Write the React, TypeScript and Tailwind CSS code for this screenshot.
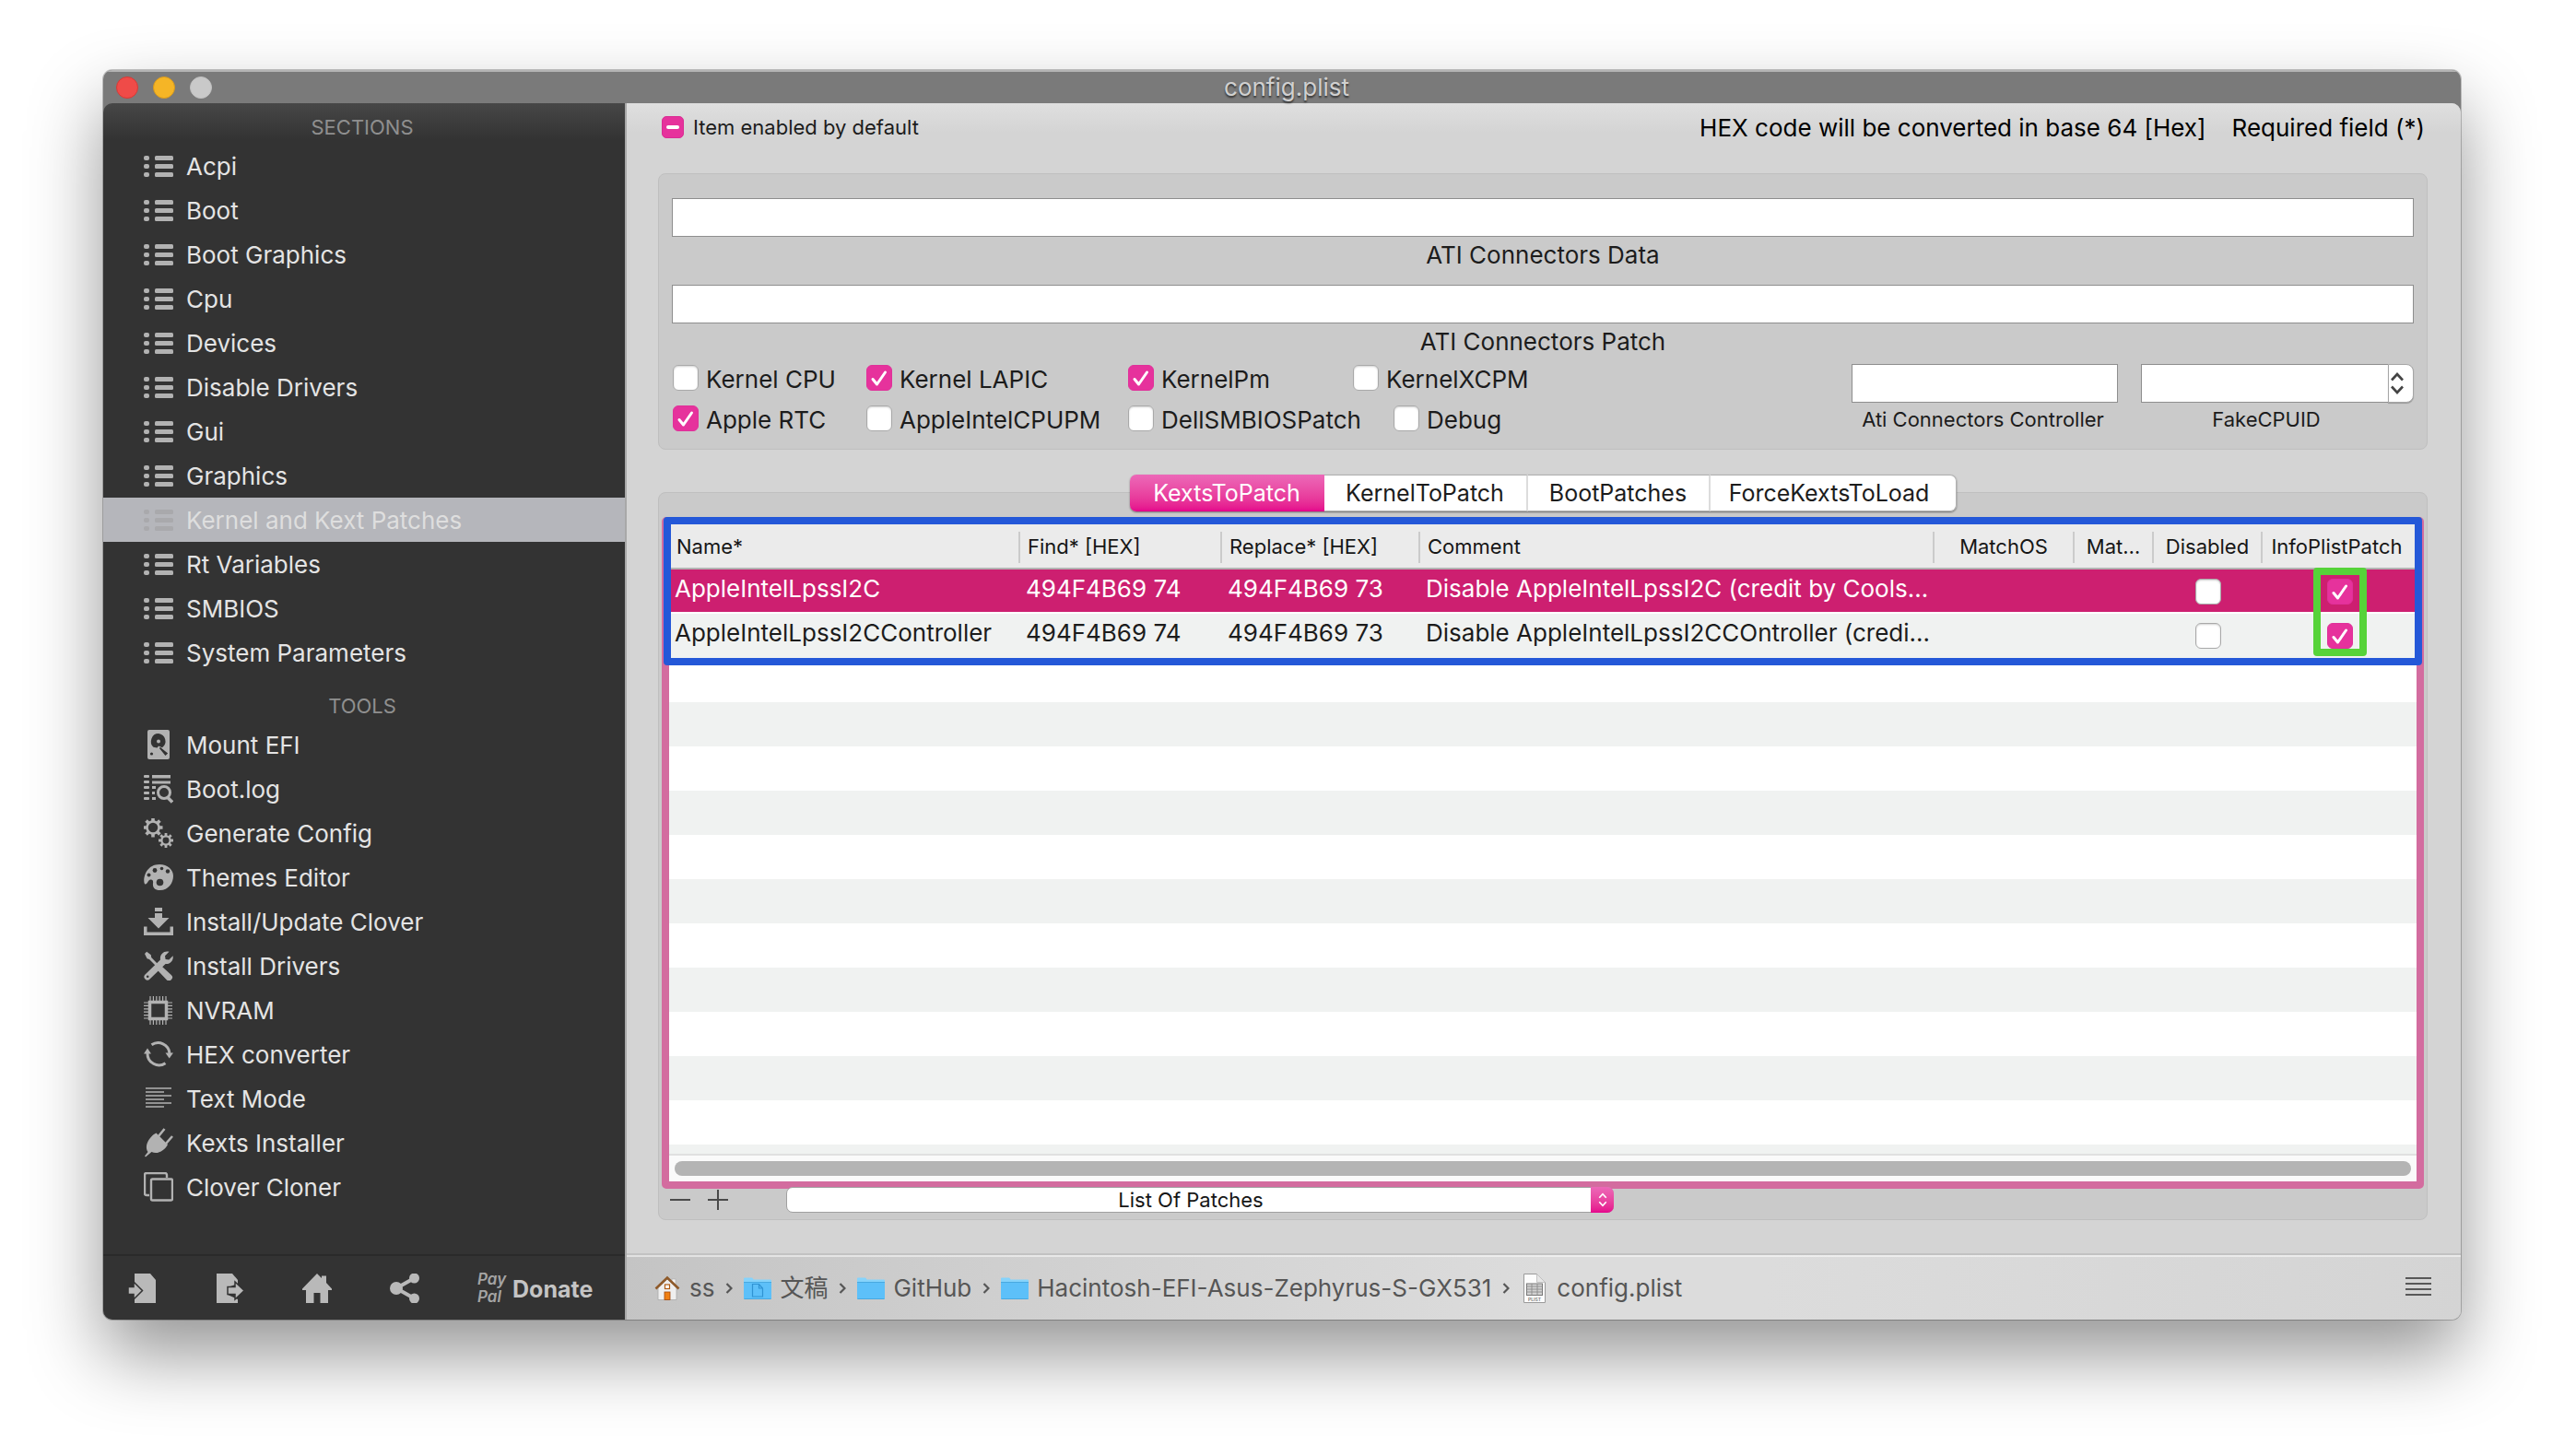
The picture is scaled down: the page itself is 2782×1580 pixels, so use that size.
import React, { useEffect, useRef } from "react";

/* ---------- sidebar icons (32 x 32 grid) ---------- */

function Svg({ children, className = "size-8" }: { children: React.ReactNode; className?: string }) {
  return (
    <svg viewBox="0 0 32 32" fill="currentColor" className={`${className} shrink-0`} aria-hidden="true">
      {children}
    </svg>
  );
}

function gearTeeth(cx: number, cy: number, from: number, to: number) {
  return Array.from({ length: 8 }, (_, i) => {
    const c = Math.cos((i * Math.PI) / 4);
    const s = Math.sin((i * Math.PI) / 4);
    return `M${(cx + from * c).toFixed(2)} ${(cy + from * s).toFixed(2)}L${(cx + to * c).toFixed(2)} ${(cy + to * s).toFixed(2)}`;
  }).join("");
}

const ListIcon = () => (
  <Svg>
    {[5, 14, 23].map((y) => (
      <g key={y}>
        <rect x="0" y={y} width="6" height="5" rx="2" />
        <rect x="12" y={y} width="20" height="5" rx="1.5" />
      </g>
    ))}
  </Svg>
);

const DiskIcon = () => (
  <Svg>
    <path d="M6 0h20a2 2 0 0 1 2 2v28a2 2 0 0 1-2 2H6a2 2 0 0 1-2-2V2a2 2 0 0 1 2-2Z" />
    <path d="M16 4a8 8.500 0 0 0-5.500 14.800l4 .7 1.500-2 4 1.800A8.500 8.500 0 0 0 16 4Z" fill="#333" />
    <path d="m17.500 19.500 7.500 6-1.500 1.500Z" fill="#333" stroke="#333" strokeWidth="1.500" />
    <circle cx="16" cy="12.500" r="2" />
    <circle cx="8.500" cy="26" r="1.600" fill="#333" />
  </Svg>
);

const LogIcon = () => (
  <Svg>
    {[0, 6, 12, 18, 24].map((y) => (
      <rect key={y} x="0" y={y + 1} width="6" height="3" rx="1" />
    ))}
    <rect x="9" y="1" width="20" height="3.500" />
    <rect x="9" y="7.500" width="20" height="3" />
    <rect x="9" y="13" width="4" height="3" />
    <rect x="9" y="19" width="3" height="3" />
    <rect x="9" y="25" width="4" height="3" />
    <circle cx="22" cy="20" r="6.500" fill="none" stroke="currentColor" strokeWidth="3" />
    <path d="M26 25.500l5 5" stroke="currentColor" strokeWidth="3.500" />
  </Svg>
);

const GearsIcon = () => (
  <Svg>
    <g fill="none" stroke="currentColor">
      <circle cx="10" cy="10" r="6.500" strokeWidth="2.600" />
      <path d={gearTeeth(10, 10, 7, 10.500)} strokeWidth="3.600" />
      <circle cx="24" cy="24" r="4.600" strokeWidth="2.300" />
      <path d={gearTeeth(24, 24, 5, 8)} strokeWidth="2.800" />
    </g>
  </Svg>
);

const PaletteIcon = () => (
  <Svg>
    <path d="M17 2C26 2 32 8 32 14.500 32 22 27 30 17.500 30c-6 0-8-3.500-7.500-7.500.4-3-.5-4.500-3-4-2.500.6-3 5.500-5.500 5C-1.500 22.500 0 2 17 2Z" />
    <g fill="#333">
      <circle cx="17.500" cy="21.500" r="3.800" />
      <circle cx="5.500" cy="13.500" r="2" />
      <circle cx="12" cy="8.500" r="2.400" />
      <circle cx="19.500" cy="6.500" r="1.800" />
      <circle cx="26" cy="9.500" r="2.200" />
    </g>
  </Svg>
);

const DownloadIcon = () => (
  <Svg>
    <rect x="12" y="1" width="8" height="4" />
    <path d="M12 7h8v5h7.500L16 23.500 4.500 12H12Z" />
    <path d="M0 21.500h3.500v6h25v-6H32V31H0Z" />
  </Svg>
);

const ToolsIcon = () => (
  <Svg>
    <path d="M1 3 3.200.8l4.600 3.400.4 2.800 9 9.200-2 2L6 9 3.600 8.200Z" />
    <path d="m19.500 17.500 9.800 9a2.800 2.800 0 0 1-4 4.200l-9.200-9.600Z" stroke="currentColor" strokeWidth="1.500" />
    <path d="M27.500.8 23 5.300l.6 3.600 3.700.7 4.300-4.400c1 4.600-2.600 9.400-8 8.800L6.500 30.500a3.400 3.400 0 0 1-5-5L18 9.400C17 3.600 22-.8 27.500.8Z" />
    <circle cx="4.200" cy="27.800" r="1.300" fill="#333" />
  </Svg>
);

const ChipIcon = () => (
  <Svg>
    <path
      d="M7 1v31M10.400 1v31M13.800 1v31M17.200 1v31M20.600 1v31M24 1v31M0 8h31M0 11.400h31M0 14.800h31M0 18.200h31M0 21.600h31M0 25h31"
      stroke="currentColor"
      strokeWidth="1.200"
    />
    <rect x="6.500" y="7.500" width="18" height="18" fill="#333" stroke="currentColor" strokeWidth="3.500" />
  </Svg>
);

const RefreshIcon = () => (
  <Svg>
    <g fill="none" stroke="currentColor" strokeWidth="3">
      <path d="M8.500 5.800A12.500 12.500 0 0 1 28 15" />
      <path d="M4 15a12.500 12.500 0 0 0 19.500 10.700" />
    </g>
    <path d="M23.500 14.500H32l-4.300 6ZM0 15.500h8l-4-6Z" />
  </Svg>
);

const TextIcon = () => (
  <Svg className="size-8 opacity-75">
    {[4, 8, 12, 16, 20, 24].map((y, i) => (
      <rect key={y} x="2" y={y} width={i % 2 ? 20 : 28} height="2" />
    ))}
  </Svg>
);

const PlugIcon = () => (
  <Svg>
    <path d="M13.500 5.500 26 18c-3 6-11 11.500-17.500 8L2 31.500l-1-1L4.500 26C0 19 6.500 9 13.500 5.500Z" />
    <path d="M16 9l6.500-8M24 17l7-8" stroke="currentColor" strokeWidth="2.600" />
  </Svg>
);

const CopyIcon = () => (
  <Svg>
    <g fill="none" stroke="currentColor" strokeWidth="2.400">
      <path d="M25 6V3a2 2 0 0 0-2-2H3a2 2 0 0 0-2 2v20a2 2 0 0 0 2 2h3" />
      <rect x="8" y="7.500" width="23" height="23" rx="1.500" />
    </g>
  </Svg>
);

/* ---------- sidebar bar icons ---------- */

const ImportIcon = () => (
  <Svg>
    <path d="M8 0h17l6 7v25H8v-7l9-6.500L8 12Z" />
    <path d="M1 14.500h6V9l9.500 9.500L7 28v-5.500H1Z" stroke="#333" strokeWidth="1.500" />
  </Svg>
);

const ExportIcon = () => (
  <Svg>
    <path d="M2 0h17l6 7v4l-11 4v8l11 5v4H2Z" />
    <path d="M14 14.500h8V9l10 9.500L22 28v-5.500h-8Z" stroke="#333" strokeWidth="1.500" />
  </Svg>
);

const HomeIcon = () => (
  <Svg>
    <path d="M16 0l5 5V2.500h5V10l6 6.500V18h-4v14h-8.500V21h-7v11H4V18H0v-1.500Z" />
  </Svg>
);

const ShareIcon = () => (
  <Svg>
    <circle cx="7" cy="16" r="7" />
    <circle cx="26.500" cy="5" r="5.500" />
    <circle cx="26.500" cy="27" r="5.500" />
    <path d="M26.500 5 7 16l19.500 11" fill="none" stroke="currentColor" strokeWidth="4" />
  </Svg>
);

/* ---------- path bar icons ---------- */

const HouseGlyph = () => (
  <svg viewBox="0 0 30 30" className="size-[30px]" aria-hidden="true">
    <rect x="20" y="5" width="4" height="8" fill="#f4f4f4" stroke="#aaa" strokeWidth=".6" />
    <path d="M5 14 15 5l10 9v13.500H5Z" fill="#efefef" stroke="#a8a8a8" strokeWidth=".8" />
    <path d="m2.500 15.500 12.500-12 12.500 12" fill="none" stroke="#8f5a2a" strokeWidth="2.600" />
    <rect x="12.500" y="11" width="5" height="4.500" fill="#fff" stroke="#b05c14" strokeWidth="1.200" />
    <rect x="12" y="19" width="6" height="8.500" fill="#ef7f12" stroke="#a3480a" strokeWidth=".8" />
  </svg>
);

const FolderGlyph = ({ doc = false }: { doc?: boolean }) => (
  <svg viewBox="0 0 30 30" className="size-[30px]" aria-hidden="true">
    <path d="M0 4.500Q0 3.500 1 3.500h7.500q1 0 1.500 1l.5 1H29q1 0 1 1V25H0Z" fill="#86d3fb" />
    <path d="M0 8.500h30V26q0 1-1 1H1q-1 0-1-1Z" fill="#5dc0f9" />
    <path d="M0 8.500h30M.5 26.500h29" stroke="#45a5dd" strokeWidth=".9" />
    {doc && (
      <path d="M9.500 10.500h7l4 4.500v9h-11Zm7 0V15h4" fill="none" stroke="#2f93d3" strokeWidth="1.200" />
    )}
  </svg>
);

const PlistGlyph = () => (
  <svg viewBox="0 0 30 32" className="h-8 w-[30px]" aria-hidden="true">
    <path d="M3.500.5h14l9 9v22h-23Z" fill="#fcfcfc" stroke="#9a9a9a" />
    <path d="M17.500.5v9h9" fill="#e6e6e6" stroke="#b8b8b8" strokeWidth=".8" />
    <rect x="6.500" y="11" width="17" height="12.500" fill="#d2d2d2" stroke="#777" />
    <path d="M6.500 14h17M6.500 17h17M6.500 20h17M12 11v12.500M18 11v12.500" stroke="#8a8a8a" strokeWidth=".9" />
    <text x="15" y="29.800" textAnchor="middle" fontSize="5" fontFamily="Inter" fontWeight="600" fill="#777">
      PLIST
    </text>
  </svg>
);

const Steppers = ({ className }: { className: string }) => (
  <svg viewBox="0 0 16 24" fill="none" stroke="currentColor" className={className} aria-hidden="true">
    <path d="m2 8.500 6-6.500 6 6.500M2 15.500l6 6.500 6-6.500" strokeWidth="2.600" />
  </svg>
);

/* ---------- controls ---------- */

const Tick = () => (
  <svg viewBox="0 0 28 28" className="pointer-events-none absolute inset-0 size-full" aria-hidden="true">
    <path d="m7 15.500 4.500 5.500L20.500 8" fill="none" stroke="#fff" strokeWidth="3" strokeLinecap="round" strokeLinejoin="round" />
  </svg>
);

function CheckBox({ on = false, label }: { on?: boolean; label?: string }) {
  return (
    <span className="relative block size-7 shrink-0">
      <input
        type="checkbox"
        defaultChecked={on}
        aria-label={label}
        className="block size-7 appearance-none rounded-md border border-[#a9a9a9] bg-white shadow-[inset_0_1px_2px_rgba(0,0,0,0.18)] checked:border-[#e0309a] checked:bg-[#e6329c] checked:shadow-none"
      />
      {on && <Tick />}
    </span>
  );
}

function Option({ on, text, width }: { on?: boolean; text: string; width?: string }) {
  return (
    <label className={`flex h-7 items-center gap-2 whitespace-nowrap ${width ?? ""}`}>
      <CheckBox on={on} />
      <span className="pt-1">{text}</span>
    </label>
  );
}

function DefaultItem() {
  const ref = useRef<HTMLInputElement>(null);
  useEffect(() => {
    if (ref.current) ref.current.indeterminate = true;
  }, []);
  return (
    <label className="flex items-center gap-[10px] text-[22px] text-[#1c1c1c]">
      <span className="relative block size-6">
        <input ref={ref} type="checkbox" className="block size-6 appearance-none rounded-[5px] border border-[#d92c93] bg-[#e6329c]" />
        <span className="pointer-events-none absolute inset-x-[5px] top-[10px] h-1 rounded-full bg-white" />
      </span>
      Item enabled by default
    </label>
  );
}

/* ---------- data ---------- */

const SECTIONS = [
  "Acpi",
  "Boot",
  "Boot Graphics",
  "Cpu",
  "Devices",
  "Disable Drivers",
  "Gui",
  "Graphics",
  "Kernel and Kext Patches",
  "Rt Variables",
  "SMBIOS",
  "System Parameters",
];

const TOOLS: [string, () => React.JSX.Element][] = [
  ["Mount EFI", DiskIcon],
  ["Boot.log", LogIcon],
  ["Generate Config", GearsIcon],
  ["Themes Editor", PaletteIcon],
  ["Install/Update Clover", DownloadIcon],
  ["Install Drivers", ToolsIcon],
  ["NVRAM", ChipIcon],
  ["HEX converter", RefreshIcon],
  ["Text Mode", TextIcon],
  ["Kexts Installer", PlugIcon],
  ["Clover Cloner", CopyIcon],
];

const COLUMNS = [
  { title: "Name*", width: "w-[381px]" },
  { title: "Find* [HEX]", width: "w-[219px]" },
  { title: "Replace* [HEX]", width: "w-[215px]" },
  { title: "Comment", width: "" },
  { title: "MatchOS", width: "w-[152px]", center: true },
  { title: "Mat…", width: "w-[86px]", center: true },
  { title: "Disabled", width: "w-[118px]", center: true },
  { title: "InfoPlistPatch", width: "w-[167px]", center: true },
];

const ROWS = [
  {
    name: "AppleIntelLpssI2C",
    find: "494F4B69 74",
    replace: "494F4B69 73",
    comment: "Disable AppleIntelLpssI2C (credit by Cools…",
  },
  {
    name: "AppleIntelLpssI2CController",
    find: "494F4B69 74",
    replace: "494F4B69 73",
    comment: "Disable AppleIntelLpssI2CCOntroller (credi…",
  },
];

const TABS = [
  { title: "KextsToPatch", width: "w-[211px]" },
  { title: "KernelToPatch", width: "w-[221px]" },
  { title: "BootPatches", width: "w-[198px]" },
  { title: "ForceKextsToLoad", width: "w-[267px]" },
];

const PATH = [
  { text: "ss", icon: <HouseGlyph /> },
  { text: "文稿", icon: <FolderGlyph doc /> },
  { text: "GitHub", icon: <FolderGlyph /> },
  { text: "Hacintosh-EFI-Asus-Zephyrus-S-GX531", icon: <FolderGlyph /> },
  { text: "config.plist", icon: <PlistGlyph /> },
];

/* ---------- regions ---------- */

function SideItem({ text, icon, active }: { text: string; icon: React.ReactNode; active?: boolean }) {
  return (
    <li>
      <button
        type="button"
        className={`flex h-12 w-full items-center gap-[14px] pl-11 text-left ${
          active ? "bg-[#b5b6bb] text-[#dedede]" : "text-[#e4e4e4]"
        }`}
      >
        <span className={active ? "text-[#a9a9ac]" : "text-[#b2b2b2]"}>{icon}</span>
        <span className="pt-0.5">{text}</span>
      </button>
    </li>
  );
}

function Sidebar() {
  return (
    <aside className="flex w-[566px] shrink-0 flex-col rounded-tl-[10px] bg-[#333] bg-[linear-gradient(#474747,#333_40px)]">
      <nav className="flex-1">
        <h2 className="flex h-11 items-center justify-center pt-2 pr-1 text-[22px] text-[#8f8f8f]">SECTIONS</h2>
        <ul>
          {SECTIONS.map((s) => (
            <SideItem key={s} text={s} icon={<ListIcon />} active={s === "Kernel and Kext Patches"} />
          ))}
        </ul>
        <h2 className="flex h-[52px] items-center justify-center pt-4 pr-1 text-[22px] text-[#8f8f8f]">TOOLS</h2>
        <ul>
          {TOOLS.map(([text, Icon]) => (
            <SideItem key={text} text={text} icon={<Icon />} />
          ))}
        </ul>
      </nav>
      <div className="flex h-[71px] items-center gap-[63px] border-t-2 border-[#2a2a2a] pl-[26px] text-[#b9b9b9]">
        <button type="button" aria-label="Import"><ImportIcon /></button>
        <button type="button" aria-label="Export"><ExportIcon /></button>
        <button type="button" aria-label="Home"><HomeIcon /></button>
        <button type="button" aria-label="Share"><ShareIcon /></button>
        <button type="button" className="flex items-center gap-1.5">
          <span className="flex w-8 flex-col text-left text-[17px] leading-[19px] font-semibold text-[#a4a4a4] italic">
            <span>Pay</span>
            <span>Pal</span>
          </span>
          <span className="pt-0.5 text-[25px] font-bold text-[#c4c4c4]">Donate</span>
        </button>
      </div>
    </aside>
  );
}

const FIELD = "block h-[42px] w-full border border-[#8e8e8e] bg-white px-2 outline-none";

function ConnectorsPanel() {
  return (
    <section className="h-[300px] rounded-[8px] border border-[#bfbfbf] bg-[#cacaca] px-[14px] pt-[26px]">
      <input id="ati-data" className={FIELD} />
      <label htmlFor="ati-data" className="mb-3 block text-center leading-10">ATI Connectors Data</label>
      <input id="ati-patch" className={FIELD} />
      <label htmlFor="ati-patch" className="mb-1 block text-center leading-10">ATI Connectors Patch</label>
      <div className="flex justify-between">
        <div className="flex flex-col gap-4 pt-px pl-px">
          <div className="flex">
            <Option text="Kernel CPU" width="w-[210px]" />
            <Option text="Kernel LAPIC" width="w-[284px]" on />
            <Option text="KernelPm" width="w-[244px]" on />
            <Option text="KernelXCPM" />
          </div>
          <div className="flex">
            <Option text="Apple RTC" width="w-[210px]" on />
            <Option text="AppleIntelCPUPM" width="w-[284px]" />
            <Option text="DellSMBIOSPatch" width="w-[288px]" />
            <Option text="Debug" />
          </div>
        </div>
        <div className="flex gap-[25px] text-center text-[22px]">
          <div className="w-[289px]">
            <input id="ati-controller" className={FIELD} />
            <label htmlFor="ati-controller" className="block pr-1 leading-9">Ati Connectors Controller</label>
          </div>
          <div className="w-[296px]">
            <div className="flex">
              <input id="fake-cpuid" className="block h-[42px] min-w-0 flex-1 border border-r-0 border-[#8e8e8e] bg-white px-2 outline-none" />
              <button
                type="button"
                aria-label="FakeCPUID values"
                className="grid h-[42px] w-7 place-items-center rounded-r-[8px] border border-[#a6a6a6] bg-white pr-2 text-[#444] shadow-[0_1px_1px_rgba(0,0,0,0.25)]"
              >
                <Steppers className="h-6 w-4" />
              </button>
            </div>
            <label htmlFor="fake-cpuid" className="block pr-6 leading-9">FakeCPUID</label>
          </div>
        </div>
      </div>
    </section>
  );
}

function PatchTable() {
  return (
    <div className="mx-[3px] mt-1.5 flex flex-1 flex-col rounded-[5px] border-8 border-[#d36c9f] bg-white">
      <div className="relative">
        <table className="w-full table-fixed border-collapse text-left">
          <colgroup>
            {COLUMNS.map((c) => (
              <col key={c.title} className={c.width} />
            ))}
          </colgroup>
          <thead>
            <tr className="h-[49px] bg-[#ebebeb] text-[22px] text-[#161616] shadow-[inset_0_-2px_0_#b3b3b3]">
              {COLUMNS.map((c, i) => (
                <th key={c.title} scope="col" className="p-0 font-normal">
                  <div
                    className={`h-[34px] leading-[32px] whitespace-nowrap ${c.center ? "text-center" : "pl-2"} ${
                      i < COLUMNS.length - 1 ? "border-r-2 border-[#cbcbcb]" : "pr-1.5"
                    }`}
                  >
                    {c.title}
                  </div>
                </th>
              ))}
            </tr>
          </thead>
          <tbody className="text-[26px]">
            {ROWS.map((r, i) => (
              <tr
                key={r.name}
                className={
                  i === 0
                    ? "h-12 bg-[#cd1f70] text-white shadow-[inset_0_-2px_0_#ffffff]"
                    : "h-12 bg-[#f0f2f1] text-[#1c1c1c]"
                }
              >
                <td className="truncate p-0 pb-1.5 pl-1.5">{r.name}</td>
                <td className="truncate p-0 pb-1.5 pl-1.5">{r.find}</td>
                <td className="truncate p-0 pb-1.5 pl-1.5">{r.replace}</td>
                <td className="truncate p-0 pb-1.5 pl-1.5">{r.comment}</td>
                <td />
                <td />
                <td className="p-0">
                  <div className="flex justify-center">
                    <CheckBox label={`Disabled: ${r.name}`} />
                  </div>
                </td>
                <td className="relative p-0">
                  <div className="flex justify-center">
                    <CheckBox on label={`InfoPlistPatch: ${r.name}`} />
                  </div>
                  {i === 0 && (
                    <div className="pointer-events-none absolute -top-0.5 left-1/2 z-10 h-24 w-[58px] -translate-x-1/2 rounded-[4px] border-8 border-[#56d339]" />
                  )}
                </td>
              </tr>
            ))}
          </tbody>
        </table>
        <div className="pointer-events-none absolute -inset-x-1.5 -top-2 -bottom-2 rounded-[4px] border-8 border-[#2458d8]" />
      </div>
      <div className="flex-1 bg-[repeating-linear-gradient(#ffffff_0_48px,#f0f2f1_48px_96px)]" />
      <div className="border-t-2 border-[#e0e0e0] bg-[#fafafa] px-1.5 pt-1.5 pb-1.5">
        <div className="h-4 rounded-full bg-[#b4b4b4]" />
      </div>
    </div>
  );
}

function PatchesPanel() {
  return (
    <section className="mt-[46px] mb-9 flex flex-1 flex-col rounded-[8px] border border-[#bfbfbf] bg-[#cacaca]">
      <div role="tablist" className="-mt-5 flex justify-center text-[25px]">
        <div className="flex h-10 rounded-[7px] shadow-[0_1px_2px_rgba(0,0,0,0.45)]">
          {TABS.map((t, i) => (
            <button
              key={t.title}
              type="button"
              role="tab"
              aria-selected={i === 0}
              className={`${t.width} ${
                i === 0
                  ? "rounded-l-[7px] bg-linear-to-b from-[#ec68b8] to-[#e5008c] text-white"
                  : i === 3
                    ? "rounded-r-[7px] border-y border-r border-[#b0b0b0] bg-white pr-2 text-[#1c1c1c]"
                    : "border-y border-r-2 border-y-[#b0b0b0] border-r-[#dcdcdc] bg-white text-[#1c1c1c]"
              }`}
            >
              {t.title}
            </button>
          ))}
        </div>
      </div>
      <PatchTable />
      <div className="-mt-0.5 flex items-center pb-[7px] pl-3 text-[#4a4a4a]">
        <button type="button" aria-label="Remove" className="mr-[19px]">
          <svg viewBox="0 0 22 22" className="size-[22px]"><path d="M0 11h22" stroke="currentColor" strokeWidth="2" /></svg>
        </button>
        <button type="button" aria-label="Add" className="mr-[63px]">
          <svg viewBox="0 0 22 22" className="size-[22px]"><path d="M0 11h22M11 0v22" stroke="currentColor" strokeWidth="2" /></svg>
        </button>
        <div className="relative h-7 w-[898px]">
          <select
            aria-label="List Of Patches"
            className="block h-7 w-full appearance-none rounded-[7px] border border-[#a0a0a0] bg-white pr-5 text-center text-[22px] leading-6 text-[#161616] [text-align-last:center]"
          >
            <option>List Of Patches</option>
          </select>
          <span className="pointer-events-none absolute inset-y-0 right-0 grid w-[25px] place-items-center rounded-r-[7px] bg-linear-to-b from-[#ec68b8] to-[#e5008c] text-white">
            <Steppers className="h-4 w-[10px]" />
          </span>
        </div>
      </div>
    </section>
  );
}

function PathBar() {
  return (
    <footer className="flex h-[72px] items-center border-t-2 border-[#c2c2c2] bg-[linear-gradient(100deg,#c4c4c4,#cfcfcf_20%,#dcdcdc_50%,#dcdcdc_62%,#d4d4d4)] pr-8 pl-[29px] text-[#565656] shadow-[inset_0_2px_0_rgba(255,255,255,0.5)]">
      <ol className="flex flex-1 items-center pt-0.5">
        {PATH.map((p, i) => (
          <li key={p.text} className="flex items-center">
            {i > 0 && (
              <svg viewBox="0 0 8 12" className="mr-3 ml-3 h-3 w-2" fill="none" aria-hidden="true">
                <path d="m1.500 1 5 5-5 5" stroke="currentColor" strokeWidth="2.200" />
              </svg>
            )}
            <a href="#" className="flex items-center gap-[9px]">
              {p.icon}
              <span>{p.text}</span>
            </a>
          </li>
        ))}
      </ol>
      <button type="button" aria-label="Menu" className="pb-0.5 text-[#585858]">
        <svg viewBox="0 0 28 20" className="h-5 w-7" stroke="currentColor" strokeWidth="2">
          <path d="M0 1h28M0 7h28M0 13h28M0 19h28" />
        </svg>
      </button>
    </footer>
  );
}

export default function App() {
  return (
    <div className="flex min-h-screen bg-white px-28 pt-[76px] pb-[148px] font-['Inter','Noto_Sans_CJK_SC',sans-serif] text-[26px] leading-8 text-[#1c1c1c]">
      <div className="flex min-w-0 flex-1 flex-col overflow-hidden rounded-[10px] bg-[#7a7a7a] shadow-[0_0_0_1px_rgba(0,0,0,0.22),0_38px_80px_rgba(0,0,0,0.42)]">
        <header className="relative flex h-9 items-center border-t-2 border-[#b4b4b4] pl-[14px]">
          <div className="flex gap-4">
            <button type="button" aria-label="Close" className="size-6 rounded-full border border-[#d63a36] bg-[#ef4b48]" />
            <button type="button" aria-label="Minimize" className="size-6 rounded-full border border-[#d99a1c] bg-[#f5b526]" />
            <button type="button" aria-label="Zoom" className="size-6 rounded-full border border-[#c0c0c0] bg-[#c9c9c9]" />
          </div>
          <h1 className="flex-1 pr-[108px] text-center text-[#d0d0d0] [text-shadow:0_2px_2px_rgba(0,0,0,0.6)]">config.plist</h1>
        </header>
        <div className="flex flex-1">
          <Sidebar />
          <main className="flex min-w-0 flex-1 flex-col rounded-tr-[10px] border-l-2 border-[#a8a8a8] bg-[#d4d4d4] bg-[linear-gradient(#dfdfdf,#d4d4d4_32px)]">
            <div className="flex flex-1 flex-col pr-9 pl-[34px]">
              <div className="mb-6 flex h-[52px] items-center justify-between pr-[3px] pl-1 text-black">
                <DefaultItem />
                <p className="flex gap-7 pt-0.5">
                  <span>HEX code will be converted in base 64 [Hex]</span>
                  <span>Required field (*)</span>
                </p>
              </div>
              <ConnectorsPanel />
              <PatchesPanel />
            </div>
            <PathBar />
          </main>
        </div>
      </div>
    </div>
  );
}
